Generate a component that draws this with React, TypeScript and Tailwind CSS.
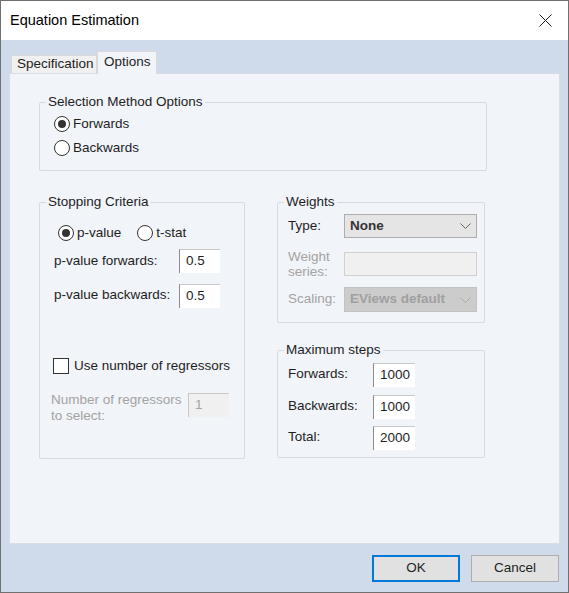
import React from 'react';

function Radio({ label, checked }: { label: string; checked?: boolean }) {
  return (
    <label className="flex items-center gap-[3px]">
      <span className="w-[16px] h-[16px] rounded-full border border-[#333333] bg-white flex items-center justify-center shrink-0">
        {checked && <span className="w-[8px] h-[8px] rounded-full bg-[#333333]" />}
      </span>
      <span>{label}</span>
    </label>
  );
}

function Field({ value, w }: { value: string; w: string }) {
  return (
    <div
      className={`${w} h-[24px] bg-white border-l border-t border-l-[#8c8c8c] border-t-[#c8c8c8] flex items-center pl-[6px] text-[#1e1e1e]`}
    >
      {value}
    </div>
  );
}

function Chevron({ color }: { color: string }) {
  return (
    <svg width="11" height="6" viewBox="0 0 11 6" fill="none">
      <polyline points="0.5,0.5 5.5,5.5 10.5,0.5" stroke={color} strokeWidth="0.9" />
    </svg>
  );
}

function Group({ title, children, className }: { title: string; children: React.ReactNode; className?: string }) {
  return (
    <fieldset className={`border border-[#d6dae2] rounded-[2px] p-0 m-0 ${className ?? ''}`}>
      <legend className="ml-[6px] px-[2px] leading-[16px] text-[#1e1e1e]">{title}</legend>
      {children}
    </fieldset>
  );
}

export default function App() {
  return (
    <div className="w-[569px] h-[593px] flex flex-col border border-[#707070] bg-[#cfdbeb] font-['Liberation_Sans',Arial,sans-serif] text-[13.5px] text-[#1e1e1e] overflow-hidden">
      {/* title bar */}
      <div className="h-[39px] shrink-0 bg-white flex items-center justify-between pl-[9px] pr-[16px]">
        <span className="text-[14.5px] text-black">Equation Estimation</span>
        <svg width="13" height="13" viewBox="0 0 13 13" fill="none">
          <path d="M0.5 0.5 L12.5 12.5 M12.5 0.5 L0.5 12.5" stroke="#1a1a1a" strokeWidth="1" />
        </svg>
      </div>

      <div className="flex-1 flex flex-col px-[8px]">
        {/* tabs */}
        <div className="flex items-end pt-[11px] pl-[2px] h-[33px]">
          <div className="w-[86px] h-[18px] bg-[#f0f0f0] border border-b-0 border-[#d9d9d9] flex items-center pl-[5px] text-[#1e1e1e]">
            Specification
          </div>
          <div className="relative -mb-px w-[60px] h-[23px] bg-[#f1f4f9] border border-b-0 border-[#d9d9d9] flex items-center pl-[6px] pb-[2px]">
            Options
          </div>
        </div>

        {/* panel */}
        <div className="h-[471px] bg-[#f1f4f9] border border-[#d9dde5] pt-[20px] pl-[29px]">
          <Group title="Selection Method Options" className="w-[448px]">
            <div className="pt-[2px] pb-[10px] pl-[14px]">
              <div className="h-[24px] flex items-center">
                <Radio label="Forwards" checked />
              </div>
              <div className="h-[24px] flex items-center">
                <Radio label="Backwards" />
              </div>
            </div>
          </Group>

          <div className="flex gap-[32px] mt-[23px]">
            {/* left column */}
            <Group title="Stopping Criteria" className="w-[206px]">
              <div className="pb-[34px]">
                <div className="mt-[11px] h-[24px] flex items-center gap-[16px] pl-[18px]">
                  <Radio label="p-value" checked />
                  <Radio label="t-stat" />
                </div>
                <div className="mt-[4px] h-[24px] flex items-center pl-[14px]">
                  <span className="w-[125px]">p-value forwards:</span>
                  <Field value="0.5" w="w-[41px]" />
                </div>
                <div className="mt-[10px] h-[25px] flex items-center pl-[14px]">
                  <span className="w-[125px]">p-value backwards:</span>
                  <Field value="0.5" w="w-[41px]" />
                </div>
                <div className="mt-[46px] h-[24px] flex items-center gap-[5px] pl-[13px]">
                  <span className="w-[16px] h-[16px] border border-[#333333] bg-white shrink-0" />
                  <span>Use number of regressors</span>
                </div>
                <div className="mt-[14px] flex items-start pl-[11px]">
                  <span className="w-[137px] leading-[16px] text-[#a3a3a3]">
                    Number of regressors
                    <br />
                    to select:
                  </span>
                  <div className="mt-[1px] w-[41px] h-[24px] bg-[#f0f0f0] border-l border-t border-[#c8c8c8] flex items-center pl-[6px] text-[#a3a3a3]">
                    1
                  </div>
                </div>
              </div>
            </Group>

            {/* right column */}
            <div className="flex flex-col gap-[19px]">
              <Group title="Weights" className="w-[208px]">
                <div className="pl-[10px] pb-[10px]">
                  <div className="mt-[4px] h-[24px] flex items-center">
                    <span className="w-[56px]">Type:</span>
                    <div className="w-[133px] h-[24px] bg-[#e5e5e5] border border-[#adadad] flex items-center justify-between pl-[5px] pr-[5px]">
                      <span className="font-bold text-[#333333]">None</span>
                      <Chevron color="#555555" />
                    </div>
                  </div>
                  <div className="mt-[11px] h-[30px] flex items-center">
                    <span className="w-[56px] leading-[15px] text-[#a3a3a3]">
                      Weight
                      <br />
                      series:
                    </span>
                    <div className="w-[133px] h-[24px] bg-[#f0f0f0] border border-[#d0d0d0]" />
                  </div>
                  <div className="mt-[8px] h-[25px] flex items-center">
                    <span className="w-[56px] text-[#a3a3a3]">Scaling:</span>
                    <div className="w-[133px] h-[25px] bg-[#cccccc] border border-[#c2c2c2] flex items-center justify-between pl-[5px] pr-[5px]">
                      <span className="font-bold text-[#a0a0a0]">EViews default</span>
                      <Chevron color="#a8a8a8" />
                    </div>
                  </div>
                </div>
              </Group>

              <Group title="Maximum steps" className="w-[208px]">
                <div className="pl-[10px] pb-[8px]">
                  <div className="mt-[5px] h-[23px] flex items-center">
                    <span className="w-[85px]">Forwards:</span>
                    <Field value="1000" w="w-[42px]" />
                  </div>
                  <div className="mt-[9px] h-[23px] flex items-center">
                    <span className="w-[85px]">Backwards:</span>
                    <Field value="1000" w="w-[42px]" />
                  </div>
                  <div className="mt-[8px] h-[23px] flex items-center">
                    <span className="w-[85px]">Total:</span>
                    <Field value="2000" w="w-[42px]" />
                  </div>
                </div>
              </Group>
            </div>
          </div>
        </div>

        {/* buttons */}
        <div className="mt-[11px] flex justify-end gap-[11px] pr-[1px]">
          <button className="w-[88px] h-[27px] bg-[#e1e1e1] border-2 border-[#0078d7] text-[#1e1e1e]">OK</button>
          <button className="w-[88px] h-[27px] bg-[#e1e1e1] border border-[#adadad] text-[#1e1e1e]">Cancel</button>
        </div>
      </div>
    </div>
  );
}
